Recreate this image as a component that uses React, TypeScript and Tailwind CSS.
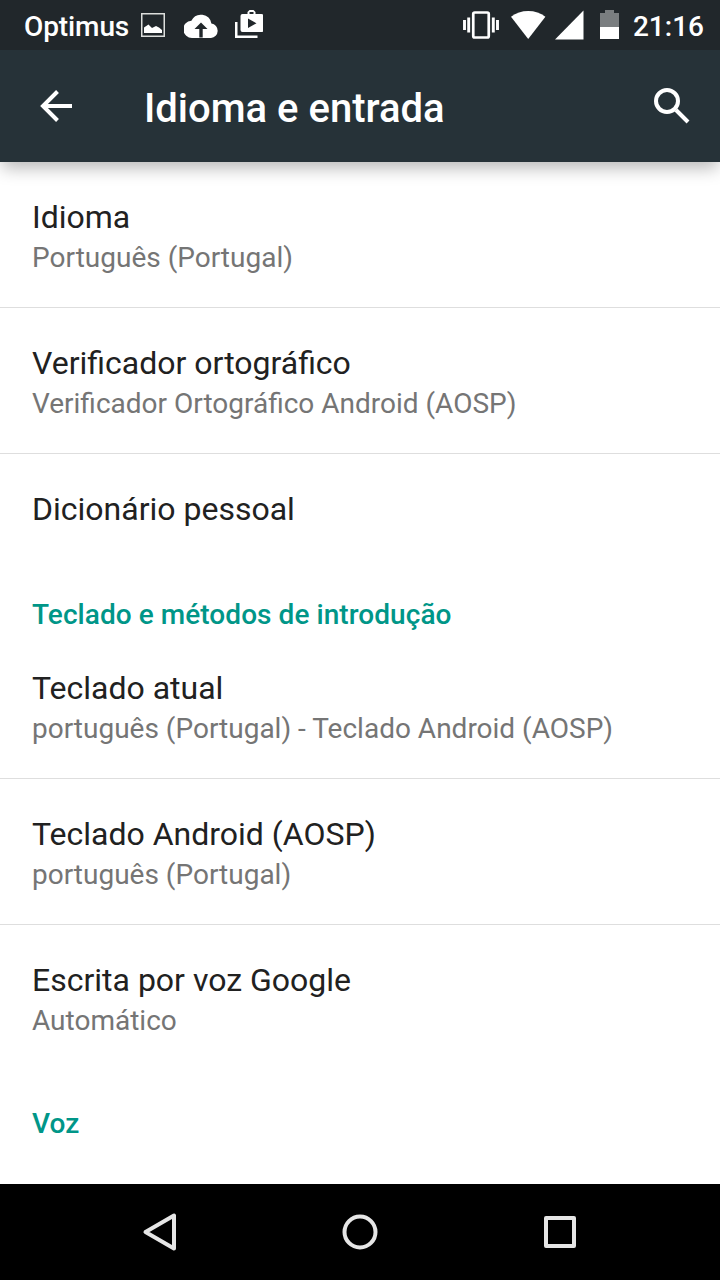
import React, { type FC, type ReactNode } from "react";

type Preference = {
  title: string;
  summary?: string;
  divider?: boolean;
};

const GENERAL: Preference[] = [
  { title: "Idioma", summary: "Português (Portugal)", divider: true },
  {
    title: "Verificador ortográfico",
    summary: "Verificador Ortográfico Android (AOSP)",
    divider: true,
  },
  { title: "Dicionário pessoal" },
];

const KEYBOARDS: Preference[] = [
  {
    title: "Teclado atual",
    summary: "português (Portugal) - Teclado Android (AOSP)",
    divider: true,
  },
  {
    title: "Teclado Android (AOSP)",
    summary: "português (Portugal)",
    divider: true,
  },
  { title: "Escrita por voz Google", summary: "Automático" },
];

const StatusBar: FC = () => (
  <div className="flex h-[50px] items-center bg-[#21272b] pr-4 pl-6 text-[28px] font-medium text-white">
    <span className="w-[117px] whitespace-nowrap leading-[33px] pt-[3px] tracking-[-0.1px]">
      Optimus
    </span>
    <svg className="h-[50px] w-6" viewBox="0 0 24 50" fill="none">
      <rect x="0.75" y="13.75" width="22.5" height="22.5" stroke="#dcdedc" strokeWidth="1.5" />
      <path d="M3 33v-5.500l4.500-3 3.500 3.500 4-2 3 1.500 3 2.500v3z" fill="#fff" />
    </svg>
    <svg className="ml-[19px] h-[50px] w-[34px]" viewBox="0 0 34 50" fill="#fff">
      <path
        fillRule="evenodd"
        d="M27.400 23.500A10.600 10.600 0 0 0 7.400 20.700 8.600 8.600 0 0 0 8.500 38H27a7.300 7.300 0 0 0 .4-14.500zM18.700 29v8.500h-3.400V29H10.500l6.500-6.500 6.500 6.500z"
      />
    </svg>
    <svg className="ml-[17px] h-[50px] w-[28px]" viewBox="0 0 28 50" fill="none">
      <path d="M1.250 22V36.750H22.500" stroke="#fff" strokeWidth="2.500" />
      <path
        fillRule="evenodd"
        fill="#fff"
        d="M12.500 14V12l2-2h4l2 2v2H26.500a2 2 0 0 1 2 2V30a2 2 0 0 1-2 2H7.500a2 2 0 0 1-2-2V16a2 2 0 0 1 2-2zM14.500 14h4v-2h-4zM13 18.500v9.500l8.500-4.700z"
      />
    </svg>

    <svg className="ml-auto h-[50px] w-9" viewBox="0 0 36 50" fill="none" stroke="#fff">
      <rect x="10.250" y="12.500" width="15.500" height="25" rx="1.500" strokeWidth="2.700" />
      <path d="M1.500 20v10M34.500 20v10M5.700 17.500v15M30.300 17.500v15" strokeWidth="2.900" />
    </svg>
    <svg className="ml-3 h-[50px] w-[35px]" viewBox="0 0 35 50" fill="#fff">
      <path d="M0 16.700C4.800 12.900 10.800 11 17.200 11s12.400 1.900 17.200 5.700L17.200 39z" />
    </svg>
    <svg className="ml-[9px] h-[50px] w-[29px]" viewBox="0 0 29 50" fill="#fff">
      <path d="M28.500 10.500v29H0z" />
    </svg>
    <svg className="ml-4 h-[50px] w-[19px]" viewBox="0 0 19 50">
      <path d="M5 10h9v3h5v14H0V13h5z" fill="#7a7e80" />
      <path d="M0 27h19v12H0z" fill="#fff" />
    </svg>
    <span className="ml-[14px] pt-[3px] leading-[33px]">21:16</span>
  </div>
);

const Toolbar: FC = () => (
  <div className="flex h-28 items-center bg-[#263238] pl-10 pr-[30px]">
    <svg className="h-8 w-8" viewBox="0 0 32 32" fill="none" stroke="#fff" strokeWidth="4">
      <path d="M32 16H3M17.500 1.500L3 16l14.500 14.500" />
    </svg>
    <h1 className="ml-[72px] pt-[5px] text-[40px] leading-[47px] font-medium text-white">
      Idioma e entrada
    </h1>
    <svg className="ml-auto h-9 w-9" viewBox="0 0 36 36" fill="none" stroke="#fff" strokeWidth="4">
      <circle cx="13" cy="13" r="11" />
      <path d="M22 22l12 12" />
    </svg>
  </div>
);

const PreferenceRow: FC<Preference> = ({ title, summary, divider }) => (
  <li
    className={`px-8 pt-9 ${summary ? "h-[146px]" : "h-[110px]"} ${
      divider ? "border-b border-[#dedede]" : ""
    }`}
  >
    <p className="text-[32px] leading-[38px] text-[#212121]">{title}</p>
    {summary && (
      <p className="mt-[5px] text-[28px] leading-[33px] text-[#757575]">{summary}</p>
    )}
  </li>
);

const Category: FC<{ children: ReactNode }> = ({ children }) => (
  <h2 className="h-[69px] px-8 pt-[34px] text-[28px] leading-[33px] font-medium tracking-[0.06px] text-[#009688]">
    {children}
  </h2>
);

const NavigationBar: FC = () => (
  <div className="flex h-24 items-center justify-center gap-[152px] bg-black">
    <svg className="h-12 w-12" viewBox="0 0 48 48" fill="none" stroke="#e6e6e6" strokeWidth="4" strokeLinejoin="round">
      <path d="M9.500 24L38 7.500v33z" />
    </svg>
    <svg className="h-12 w-12" viewBox="0 0 48 48" fill="none" stroke="#e6e6e6" strokeWidth="4">
      <circle cx="24" cy="24" r="15.500" />
    </svg>
    <svg className="h-12 w-12" viewBox="0 0 48 48" fill="none" stroke="#e6e6e6" strokeWidth="4" strokeLinejoin="round">
      <rect x="10" y="10" width="28" height="28" />
    </svg>
  </div>
);

const App: React.FC = () => {
  return (
    <div className="flex h-[1280px] w-[720px] flex-col overflow-hidden bg-white font-[Roboto,sans-serif]">
      <header className="relative z-10 shadow-[0_8px_16px_-2px_rgba(0,0,0,0.28)]">
        <StatusBar />
        <Toolbar />
      </header>

      <main className="min-h-0 flex-1 overflow-hidden">
        <ul>
          {GENERAL.map((pref) => (
            <PreferenceRow key={pref.title} {...pref} />
          ))}
        </ul>
        <Category>Teclado e métodos de introdução</Category>
        <ul className="pb-0.5">
          {KEYBOARDS.map((pref) => (
            <PreferenceRow key={pref.title} {...pref} />
          ))}
        </ul>
        <Category>Voz</Category>
      </main>

      <NavigationBar />
    </div>
  );
};

export default App;
